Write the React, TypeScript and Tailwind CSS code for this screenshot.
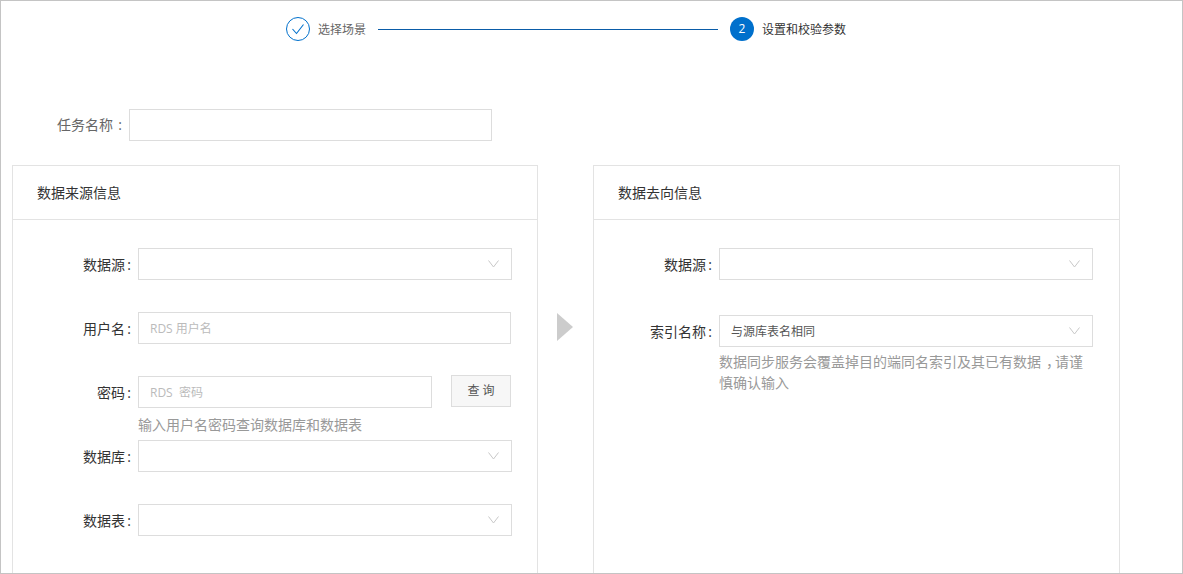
import React from "react";

const FONT = "font-['Open_Sans','Noto_Sans_CJK_SC',sans-serif]";

function Chevron() {
  return (
    <svg width="11" height="8" viewBox="0 0 11 8" fill="none" className="shrink-0 -mt-px">
      <path d="M0.5 0.5 L5.5 7 L10.5 0.5" stroke="#c8c8c8" strokeWidth="1" />
    </svg>
  );
}

function Select({ value, className = "w-[374px]" }: { value?: string; className?: string }) {
  return (
    <div className={`flex h-[32px] items-center justify-between border border-[#dddddd] bg-white pl-[11px] pr-[12px] text-[12px] text-[#555555] ${className}`}>
      <span className="pt-[2px]">{value}</span>
      <Chevron />
    </div>
  );
}

function TextInput({ placeholder, className = "w-[373px]" }: { placeholder?: string; className?: string }) {
  return (
    <div className={`flex h-[32px] items-center border border-[#dddddd] bg-white pl-[11px] pt-[2px] text-[12px] whitespace-pre text-[#bbbbbb] ${className}`}>
      {placeholder}
    </div>
  );
}

function Label({ text }: { text: string }) {
  return (
    <div className="h-[32px] w-[125px] shrink-0 pr-[7px] text-right text-[14px] leading-[34px] text-[#333333]">
      {text}
      <span className="inline-block w-[6px] text-right">:</span>
    </div>
  );
}

function Panel({ title, className, children }: { title: string; className: string; children: React.ReactNode }) {
  return (
    <section className={`h-[420px] shrink-0 border border-[#e3e3e3] bg-white ${className}`}>
      <h2 className="h-[54px] border-b border-[#e3e3e3] pl-[24px] text-[14px] leading-[53px] font-normal text-[#333333]">
        {title}
      </h2>
      {children}
    </section>
  );
}

export default function App() {
  return (
    <div className={`h-[574px] w-[1183px] overflow-hidden border border-[#c4c4c4] bg-white ${FONT}`}>
      <div className="ml-[285px] mt-[16px] flex h-[24px] items-center">
        <div className="flex h-[24px] w-[24px] items-center justify-center rounded-full border border-[#0070cc]">
          <svg width="14" height="12" viewBox="0 0 14 12" fill="none">
            <path d="M1.5 6 L5.5 10.5 L12.5 1.5" stroke="#0070cc" strokeWidth="1.1" />
          </svg>
        </div>
        <span className="ml-[8px] pt-[2px] text-[12px] text-[#666666]">选择场景</span>
        <div className="ml-[12px] h-px w-[340px] bg-[#0a5ca8]" />
        <div className="ml-[12px] flex h-[24px] w-[24px] items-center justify-center rounded-full bg-[#0070cc] text-[12px] text-white">
          2
        </div>
        <span className="ml-[8px] pt-[2px] text-[12px] text-[#333333]">设置和校验参数</span>
      </div>

      <div className="ml-[11px] mt-[68px] flex h-[32px] items-center">
        <div className="w-[117px] pb-[2px] pr-[2px] text-right text-[14px] text-[#666666]">
          任务名称<span className="inline-block w-[14px] text-center">:</span>
        </div>
        <div className="h-[32px] w-[363px] border border-[#dddddd]" />
      </div>

      <div className="ml-[11px] mt-[24px] flex items-start">
        <Panel title="数据来源信息" className="w-[526px]">
          <div className="flex flex-col pt-[28px]">
            <div className="flex">
              <Label text="数据源" />
              <Select />
            </div>
            <div className="mt-[32px] flex">
              <Label text="用户名" />
              <TextInput placeholder="RDS 用户名" />
            </div>
            <div className="mt-[32px] flex items-start">
              <Label text="密码" />
              <TextInput placeholder="RDS  密码" className="w-[294px]" />
              <button className="ml-[19px] -mt-px h-[32px] w-[60px] border border-[#dddddd] bg-[#f7f7f7] text-[12px] text-[#555555]">
                查 询
              </button>
            </div>
            <p className="ml-[125px] mt-[7px] h-[25px] text-[14px] leading-[20px] text-[#999999]">
              输入用户名密码查询数据库和数据表
            </p>
            <div className="flex">
              <Label text="数据库" />
              <Select />
            </div>
            <div className="mt-[32px] flex">
              <Label text="数据表" />
              <Select />
            </div>
          </div>
        </Panel>

        <div className="flex w-[55px] shrink-0 justify-center pt-[148px]">
          <svg width="16" height="28" viewBox="0 0 16 28" className="ml-[-2px]">
            <path d="M0 0 L16 14 L0 28 Z" fill="#cccccc" />
          </svg>
        </div>

        <Panel title="数据去向信息" className="w-[527px]">
          <div className="flex flex-col pt-[28px]">
            <div className="flex">
              <Label text="数据源" />
              <Select />
            </div>
            <div className="mt-[35px] flex">
              <Label text="索引名称" />
              <Select value="与源库表名相同" />
            </div>
            <div className="ml-[125px] mt-[4px] w-[374px] text-[14px] leading-[21px] text-[#999999]">
              <p className="whitespace-nowrap">
                数据同步服务会覆盖掉目的端同名索引及其已有数据<span className="pl-[5px] tracking-[-5px]">，</span>请谨
              </p>
              <p>慎确认输入</p>
            </div>
          </div>
        </Panel>
      </div>
    </div>
  );
}
